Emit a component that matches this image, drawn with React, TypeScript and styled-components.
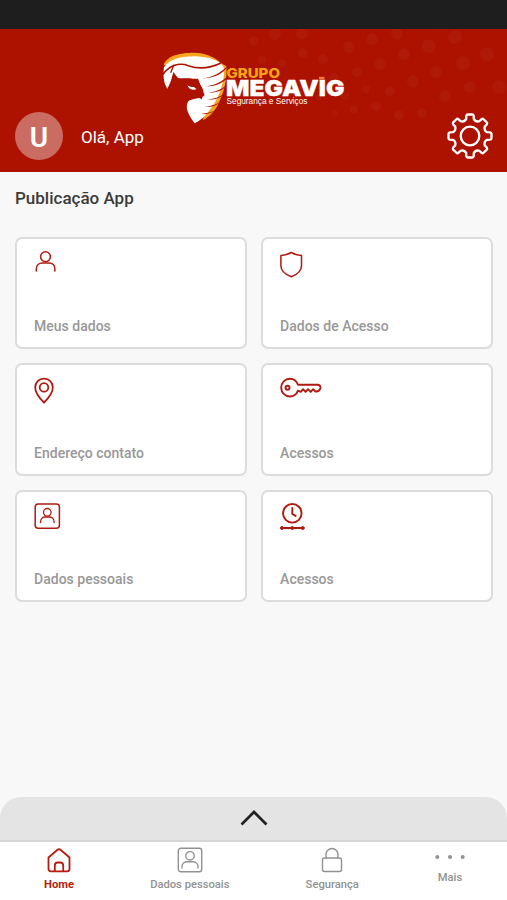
import React from "react";
import styled, { createGlobalStyle } from "styled-components";

const RED = "#b01a10";

const GlobalStyle = createGlobalStyle`
  * { box-sizing: border-box; }
  body { margin: 0; background: #f8f8f8; font-family: Roboto, "Liberation Sans", sans-serif; }
`;

const Screen = styled.div`
  width: 100%;
  height: 100vh;
  display: flex;
  flex-direction: column;
  overflow: hidden;
  background: #f8f8f8;
`;

const StatusBar = styled.div`
  flex: none;
  height: 28.5px;
  background: #1e1e1e;
`;

const Header = styled.header`
  position: relative;
  flex: none;
  height: 143.5px;
  padding: 23.5px 14px 0 15px;
  background: #ad1200;
`;

const Dots = styled.svg`
  position: absolute;
  inset: 0;
  width: 100%;
  height: 100%;
`;

const Logo = styled.svg`
  display: block;
  position: relative;
  margin-left: 147px;
  width: 190px;
  height: 60px;
  overflow: visible;
`;

const Profile = styled.div`
  position: relative;
  display: flex;
  align-items: center;
  height: 48px;
`;

const Avatar = styled.div`
  display: flex;
  align-items: center;
  justify-content: center;
  width: 48px;
  height: 48px;
  border-radius: 50%;
  background: #cb6c63;
  color: #fff;
  font-size: 28px;
  font-weight: 600;
  line-height: 1;
  padding-top: 4px;
`;

const Greeting = styled.span`
  flex: 1;
  margin: 2px 0 0 18px;
  color: #fff;
  font-size: 17px;
`;

const Gear = styled.svg`
  display: block;
  width: 46px;
  height: 46px;
`;

const Main = styled.main`
  flex: 1;
  padding: 16px 14px 0 15px;
`;

const Title = styled.h1`
  margin: 0 0 28px;
  color: #3b3b3b;
  font-size: 17px;
  font-weight: 500;
  line-height: 21px;
`;

const Grid = styled.div`
  display: grid;
  grid-template-columns: 1fr 1fr;
  gap: 14px;
`;

const Card = styled.button`
  display: flex;
  flex-direction: column;
  justify-content: space-between;
  height: 112.4px;
  padding: 10.5px 16.5px 12px;
  border: 2px solid #dcdcdc;
  border-radius: 7px;
  background: #fff;
  font-family: inherit;
  text-align: left;
`;

const CardIcon = styled.svg`
  width: 44px;
  height: 30px;
  overflow: visible;
  fill: none;
  stroke: ${RED};
  stroke-width: 1.5;
  stroke-linecap: round;
  stroke-linejoin: round;
`;

const CardLabel = styled.span`
  padding-left: 0.6px;
  color: #989898;
  font-size: 14px;
  font-weight: 500;
  line-height: 17px;
`;

const Sheet = styled.div`
  flex: none;
  display: flex;
  justify-content: center;
  height: 45px;
  padding-top: 10.5px;
  border-bottom: 2px solid #d6d6d6;
  border-radius: 21px 21px 0 0;
  background: #e4e4e4;
`;

const Chevron = styled.svg`
  width: 30px;
  height: 20px;
  fill: none;
  stroke: #222;
  stroke-width: 2.7;
`;

const Nav = styled.nav`
  flex: none;
  display: flex;
  justify-content: space-between;
  height: 58px;
  padding: 5px 42px 0 44px;
  background: #fff;
`;

const NavItem = styled.a<{ $active?: boolean; $tight?: boolean }>`
  display: flex;
  flex-direction: column;
  align-items: center;
  gap: ${(p) => (p.$tight ? "4px" : "5px")};
  color: ${(p) => (p.$active ? "#b81c10" : "#929292")};
  font-size: 11.2px;
  font-weight: ${(p) => (p.$active ? 700 : 500)};
  line-height: 14px;
`;

const NavIcon = styled.svg<{ $w?: number; $h?: number }>`
  width: ${(p) => p.$w ?? 26}px;
  height: ${(p) => p.$h ?? 26}px;
  fill: none;
  stroke: currentColor;
  stroke-width: 1.4;
  stroke-linecap: round;
  stroke-linejoin: round;
`;

const gearPath = (() => {
  const at = (r: number, deg: number) => {
    const a = ((deg - 90) * Math.PI) / 180;
    return `${(23 + r * Math.cos(a)).toFixed(2)} ${(23 + r * Math.sin(a)).toFixed(2)}`;
  };
  let d = "";
  for (let i = 0; i < 8; i++) {
    const c = i * 45;
    d += `${i ? "L" : "M"}${at(17.5, c - 12.5)} L${at(20.4, c - 10.5)} Q${at(21.8, c - 9)} ${at(21.6, c - 6)} L${at(21.6, c + 6)} Q${at(21.8, c + 9)} ${at(20.4, c + 10.5)} L${at(17.5, c + 12.5)} Q${at(14.8, c + 22.5)} ${at(17.5, c + 32.5)} `;
  }
  return d + "Z";
})();

const dots: [number, number, number][] = [
  [254, 12, 5], [275, 5, 6], [302, 4, 6], [262, 31, 4], [282, 34, 4], [303, 24, 5], [323, 30, 5],
  [349, 18, 6], [372, 10, 6], [397, 4, 6], [455, 8, 7], [429, 17, 7], [487, 25, 7], [404, 25, 6],
  [380, 35, 6], [463, 34, 7], [436, 43, 6], [413, 52, 6], [357, 43, 5], [499, 58, 7], [470, 58, 6],
  [445, 67, 6], [334, 49, 5], [390, 62, 5], [366, 60, 4], [345, 67, 4],
  [376, 77, 5], [354, 80, 4], [335, 84, 3], [319, 68, 3], [399, 86, 5], [422, 84, 5],
];

function BrandLogo() {
  return (
    <Logo viewBox="162 52 190 60">
      <g transform="translate(158 48) scale(.3333)">
        <path fill="#f7a51c" d="M17 52C24 22 70 14 108 14C142 15 170 26 190 46L205 55C208 90 200 130 180 170C168 192 150 210 134 216L170 120L120 40Z" />
        <path fill="#fff" d="M18 58C32 34 70 25 110 25C145 26 170 33 189 47L198 60C200 90 190 130 170 165C150 195 135 214 110 226C97 209 84 190 86 166C91 151 120 156 140 142L120 92L58 92L46 82L38 102L28 122C16 105 15 80 18 58Z" />
        <path fill="#ad1200" d="M38 102L46 72L60 90C76 94 95 86 108 95C117 105 133 112 136 128C137 140 134 149 130 155C124 146 112 148 100 153C90 157 87 165 86 177L64 150L30 122Z" />
        <path fill="#fff" d="M88 112C93 124 104 128 116 124L108 117C101 118 95 116 88 112Z" />
        <path fill="none" stroke="#ad1200" strokeWidth="5" d="M14 80C32 54 62 42 91 53C125 65 160 59 189 45" />
        <path fill="none" stroke="#ad1200" strokeWidth="4" d="M48 50L38 74" />
        <path fill="#ad1200" d="M212 50C190 74 165 88 130 92C162 90 188 82 203 63ZM212 82C190 104 168 113 140 115C166 116 188 108 203 95ZM208 110C187 126 170 132 146 135C167 135 184 131 196 122ZM202 135C181 150 164 153 146 155C164 156 177 153 189 146ZM192 159C169 172 156 175 138 177C154 178 166 176 176 170ZM178 184C160 194 146 196 130 197C142 200 153 198 162 193Z" />
      </g>
      <text x="226.500" y="77.500" fill="#f6a313" fontFamily="Inter, sans-serif" fontWeight="800" fontSize="13.700" textLength="53.500" lengthAdjust="spacingAndGlyphs">GRUPO</text>
      <text x="226" y="95.800" fill="#fff" stroke="#fff" strokeWidth=".3" fontFamily="Inter, sans-serif" fontWeight="900" fontSize="22" textLength="118.500" lengthAdjust="spacingAndGlyphs">MEGAVIG</text>
      <path fill="#f07d32" d="M319 76.800h5.500v2.400h-5.500z" />
      <text x="226.500" y="104" fill="#fff" fontFamily="Liberation Sans, Arial, sans-serif" fontSize="8.300" textLength="81" lengthAdjust="spacingAndGlyphs">Segurança e Serviços</text>
    </Logo>
  );
}

const cards: { label: string; icon: React.ReactNode }[] = [
  {
    label: "Meus dados",
    icon: <><circle cx="11.500" cy="6.700" r="4.900" /><path d="M2.300 21V19.200C2.300 15.200 5 13 8.500 13H14.700C18.300 13 20.900 15.200 20.900 19.200V21" /></>,
  },
  {
    label: "Dados de Acesso",
    icon: <path d="M11.300 2.500C8 4.400 4.500 5.300 .9 5.600V15.800C.9 21 5.500 24.600 11.300 26.800C17 24.600 21.500 21 21.500 15.800V5.600C18 5.300 14.500 4.400 11.300 2.500Z" />,
  },
  {
    label: "Endereço contato",
    icon: <g strokeWidth="1.800"><path d="M10 26.500C6.500 23 1.200 17.200 1.200 11.400C1.200 6.400 5 2.600 10 2.600S18.800 6.400 18.800 11.400C18.800 17.200 13.500 23 10 26.500Z" /><circle cx="10" cy="11.400" r="4.300" /></g>,
  },
  {
    label: "Acessos",
    icon: <g strokeWidth="1.900"><path d="M18 8.800H37.500C39.500 8.800 40.800 10.300 40.500 12C39.800 14.300 37.500 15.700 35.500 15.500L33.200 13.200L30.700 15.900L28 13.200L25.600 15.900L23 13.200L20.800 15.900L18 14.700C16.600 18.200 13.600 20.500 9.900 20.500C5 20.500 1.200 16.600 1.200 11.700S5 2.800 9.900 2.800C13.600 2.800 16.700 5.200 18 8.800Z" /><circle cx="7.500" cy="11.700" r="2" /></g>,
  },
  {
    label: "Dados pessoais",
    icon: <><rect x="1.200" y="2" width="24.200" height="24.200" rx="3" /><g strokeWidth="1.300"><circle cx="13.300" cy="10.300" r="3.800" /><path d="M6.600 20.600V19.800C6.600 16.800 8.800 15 11.300 15H15.300C17.900 15 20.100 16.800 20.100 19.800V20.600" /></g></>,
  },
  {
    label: "Acessos",
    icon: <g strokeWidth="1.900"><circle cx="12.300" cy="11.300" r="9.300" /><path d="M12.300 6V12L15.600 13.900M1.800 26H23" /><g fill={RED} strokeWidth="1"><circle cx="2" cy="26" r="1.500" /><circle cx="12.400" cy="26" r="1.500" /><circle cx="22.700" cy="26" r="1.500" /></g></g>,
  },
];

export default function App() {
  return (
    <Screen>
      <GlobalStyle />
      <StatusBar />
      <Header>
        <Dots viewBox="0 0 507 143">
          {dots.map(([x, y, r], i) => (
            <circle key={i} cx={x} cy={y} r={r} fill="#fff" opacity={0.03} />
          ))}
        </Dots>
        <BrandLogo />
        <Profile>
          <Avatar>U</Avatar>
          <Greeting>Olá, App</Greeting>
          <Gear viewBox="0 0 46 46" fill="none" stroke="#fff" strokeWidth="2.300" strokeLinejoin="round">
            <path d={gearPath} />
            <circle cx="23" cy="23" r="9.300" />
          </Gear>
        </Profile>
      </Header>
      <Main>
        <Title>Publicação App</Title>
        <Grid>
          {cards.map((card, i) => (
            <Card key={i}>
              <CardIcon viewBox="0 0 44 30">{card.icon}</CardIcon>
              <CardLabel>{card.label}</CardLabel>
            </Card>
          ))}
        </Grid>
      </Main>
      <Sheet>
        <Chevron viewBox="0 0 30 20">
          <path d="M2.500 16.500L15 4L27.500 16.500" />
        </Chevron>
      </Sheet>
      <Nav>
        <NavItem $active>
          <NavIcon viewBox="0 0 26 26">
            <g strokeWidth="1.800">
              <path d="M2.500 10.500L11.500 2.800Q13 1.700 14.500 2.800L23.500 10.500V22Q23.500 24.300 21.200 24.300H4.800Q2.500 24.300 2.500 22Z" />
              <path d="M8.800 24V18.500Q8.800 15.500 11.800 15.500H14.200Q17.200 15.500 17.200 18.500V24" />
            </g>
          </NavIcon>
          Home
        </NavItem>
        <NavItem>
          <NavIcon viewBox="0 0 26 26">
            <rect x="1.300" y="1.300" width="23.400" height="23.400" rx="2.500" />
            <circle cx="13" cy="8.800" r="4.200" />
            <path d="M5 21V19.500C5 16.500 7.500 14.800 10.500 14.800H15.500C18.500 14.800 21 16.500 21 19.500V21" />
          </NavIcon>
          Dados pessoais
        </NavItem>
        <NavItem>
          <NavIcon viewBox="0 0 26 26">
            <rect x="3.500" y="11" width="19" height="13.500" rx="2" />
            <path d="M7 11V7.500A6 6 0 0 1 19 7.500V11" />
          </NavIcon>
          Segurança
        </NavItem>
        <NavItem $tight>
          <NavIcon $w={30} $h={20} viewBox="0 0 30 20">
            <g fill="currentColor" stroke="none">
              <circle cx="2.300" cy="10" r="2" />
              <circle cx="15" cy="10" r="2" />
              <circle cx="27.700" cy="10" r="2" />
            </g>
          </NavIcon>
          Mais
        </NavItem>
      </Nav>
    </Screen>
  );
}
